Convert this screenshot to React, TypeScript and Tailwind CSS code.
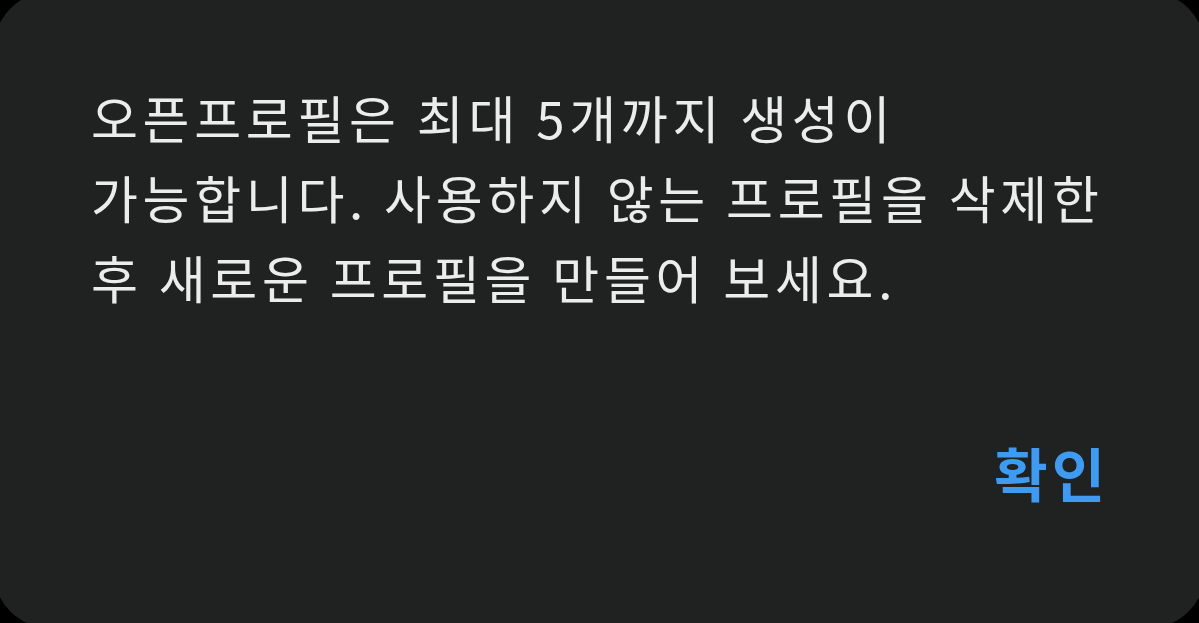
export default function App() {
  return (
    <div className="w-[1199px] h-[623px] bg-black overflow-hidden relative">
      <div
        className="absolute left-[-6px] top-[-8px] w-[1211px] h-[636px] rounded-[56px] bg-[#202121] flex flex-col"
        style={{ fontFamily: '"Noto Sans CJK KR", "Noto Sans", sans-serif' }}
      >
        <div className="pl-[97px] pt-[85px] text-[51px] leading-[80px] text-[#ececec] tracking-[4.7px]">
          <div className="whitespace-nowrap">오픈프로필은 최대 5개까지 생성이</div>
          <div className="whitespace-nowrap">가능합니다. 사용하지 않는 프로필을 삭제한</div>
          <div className="whitespace-nowrap">후 새로운 프로필을 만들어 보세요.</div>
        </div>
        <div className="flex justify-end pr-[96px] pt-[123px]">
          <span className="text-[58px] leading-[64px] font-bold text-[#3f9bf2] tracking-[4px]">확인</span>
        </div>
      </div>
    </div>
  );
}
